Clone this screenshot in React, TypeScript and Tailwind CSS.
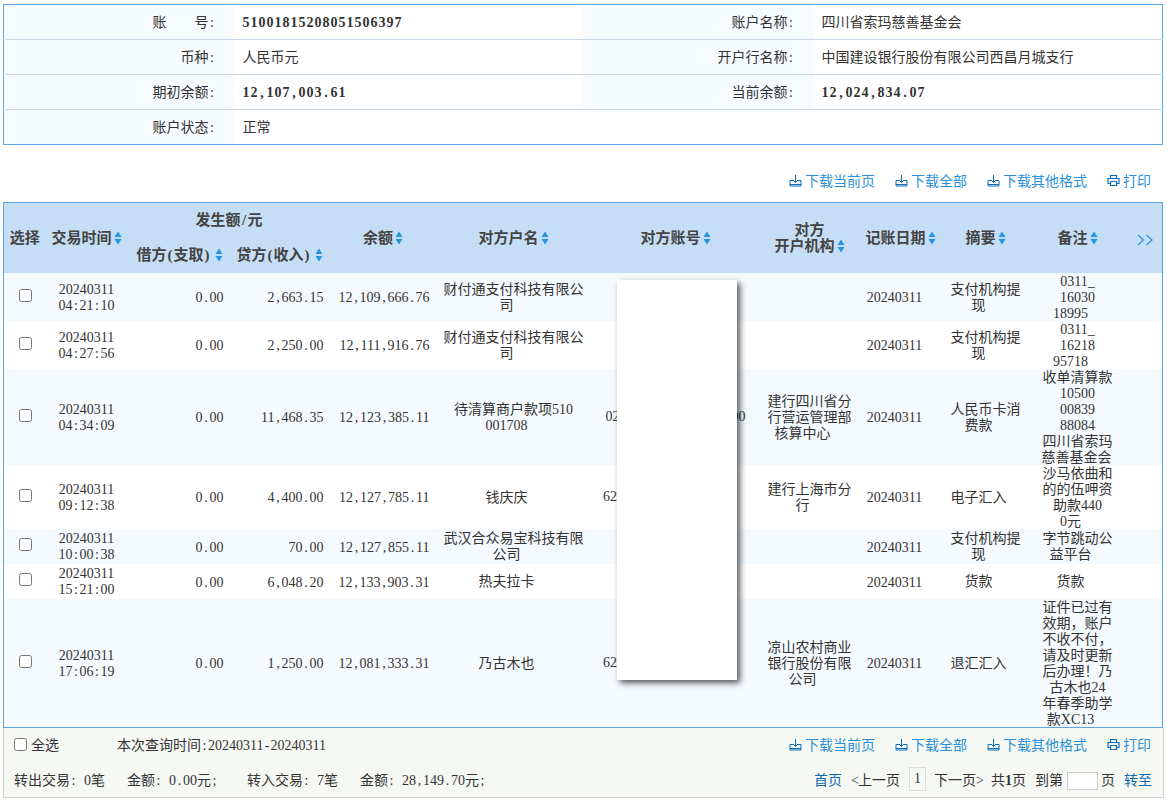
import type { ReactNode } from "react";

type Row = {
  date: string;
  time: string;
  credit: string;
  balance: string;
  name: string[];
  account: string;
  bank: string[];
  summary: string[];
  note: string[];
  accountTrail?: boolean;
};

const ROWS: Row[] = [
  { date: "20240311", time: "04:21:10", credit: "2,663.15", balance: "12,109,666.76", name: ["财付通支付科技有限公", "司"], account: "", bank: [], summary: ["支付机构提", "现"], note: ["0311_", "16030", "18995"] },
  { date: "20240311", time: "04:27:56", credit: "2,250.00", balance: "12,111,916.76", name: ["财付通支付科技有限公", "司"], account: "", bank: [], summary: ["支付机构提", "现"], note: ["0311_", "16218", "95718"] },
  { date: "20240311", time: "04:34:09", credit: "11,468.35", balance: "12,123,385.11", name: ["待清算商户款项510", "001708"], account: "02000000000000000000", bank: ["建行四川省分", "行营运管理部", "核算中心"], summary: ["人民币卡消", "费款"], note: ["收单清算款", "10500", "00839", "88084", "四川省索玛", "慈善基金会"] },
  { date: "20240311", time: "09:12:38", credit: "4,400.00", balance: "12,127,785.11", name: ["钱庆庆"], account: "6200000000000000000", accountTrail: true, bank: ["建行上海市分", "行"], summary: ["电子汇入"], note: ["沙马依曲和", "的的伍呷资", "助款440", "0元"] },
  { date: "20240311", time: "10:00:38", credit: "70.00", balance: "12,127,855.11", name: ["武汉合众易宝科技有限", "公司"], account: "", bank: [], summary: ["支付机构提", "现"], note: ["字节跳动公", "益平台"] },
  { date: "20240311", time: "15:21:00", credit: "6,048.20", balance: "12,133,903.31", name: ["热夫拉卡"], account: "", bank: [], summary: ["货款"], note: ["货款"] },
  { date: "20240311", time: "17:06:19", credit: "1,250.00", balance: "12,081,333.31", name: ["乃古木也"], account: "6200000000000000000", accountTrail: true, bank: ["凉山农村商业", "银行股份有限", "公司"], summary: ["退汇汇入"], note: ["证件已过有", "效期，账户", "不收不付，", "请及时更新", "后办理！乃", "古木也24", "年春季助学", "款XC13"] },
];

// ascii runs get a serif face, punctuation pinned to half width like the digits
function T({ children, wide }: { children: string; wide?: boolean }) {
  const parts = children.split(/([\x20-\x7e]+)/);
  return (
    <>
      {parts.map((p, i) =>
        i % 2 === 1 ? (
          <span key={i} className={`font-['Liberation_Serif'] leading-[12px] ${wide ? "tracking-[1px]" : ""}`}>
            {[...p].map((c, j) =>
              /[ ,.:;\-_()/<>]/.test(c) ? (
                <span key={j} className={`inline-block text-center ${wide ? "w-[8px]" : "w-[7px]"}`}>
                  {c}
                </span>
              ) : (
                c
              ),
            )}
          </span>
        ) : (
          p
        ),
      )}
    </>
  );
}

function Sort() {
  return (
    <svg width="8" height="14" viewBox="0 0 8 14" className="ml-[2px] inline-block align-[-2px]">
      <path d="M4 0.5 L7.5 6 H0.5 Z M4 13.5 L0.5 8 H7.5 Z" fill="#2494dc" />
    </svg>
  );
}

function DownloadIcon() {
  return (
    <svg width="13" height="13" viewBox="0 0 13 13" fill="none" stroke="#0b6cb8" strokeWidth="1">
      <path d="M4 6.5 H1 V12 H12 V6.5 H9" />
      <path d="M1 10.5 H12" />
      <path d="M6.5 1 V8.5 M4 6 L6.5 8.5 L9 6" />
    </svg>
  );
}

function PrintIcon() {
  return (
    <svg width="13" height="13" viewBox="0 0 13 13" fill="none" stroke="#0b6cb8" strokeWidth="1.2">
      <path d="M3.5 4 V1.5 H9.5 V4" />
      <path d="M3 9.5 H1 V4.5 H12 V9.5 H10" />
      <path d="M3.5 7.5 H9.5 V11.5 H3.5 Z" />
    </svg>
  );
}

function Toolbar() {
  const items = ["下载当前页", "下载全部", "下载其他格式"];
  return (
    <div className="flex items-center gap-[20px] text-[#2a90d8]">
      {items.map((t) => (
        <span key={t} className="flex items-center gap-[3px]">
          <DownloadIcon />
          {t}
        </span>
      ))}
      <span className="flex items-center gap-[3px]">
        <PrintIcon />
        打印
      </span>
    </div>
  );
}

function Lines({ lines }: { lines: string[] }) {
  return (
    <>
      {lines.map((l, i) => (
        <div
          key={i}
          className={`h-[16px] whitespace-nowrap ${i === lines.length - 1 ? "pr-[14px]" : ""}`}
        >
          <T>{l}</T>
        </div>
      ))}
    </>
  );
}

function InfoRow({
  left,
  leftValue,
  right,
  rightValue,
  bold,
  last,
}: {
  left: ReactNode;
  leftValue: ReactNode;
  right?: string;
  rightValue?: ReactNode;
  bold?: boolean;
  last?: boolean;
}) {
  const line = last ? "" : "border-b border-[#c8d6e5]";
  return (
    <tr className={`h-[35px] ${line}`}>
      <td className="bg-[#f6fbff] pb-[3px] pr-[17px] text-right">{left}</td>
      <td className={`pb-[3px] pl-[10px] ${bold ? "font-bold" : ""}`} colSpan={right ? 1 : 3}>
        {leftValue}
      </td>
      {right && <td className="bg-[#f6fbff] pb-[3px] pr-[18px] text-right">{right}<T>:</T></td>}
      {right && <td className={`pb-[3px] pl-[9px] ${bold ? "font-bold" : ""}`}>{rightValue}</td>}
    </tr>
  );
}

export default function App() {
  return (
    <div className="relative h-[801px] overflow-hidden bg-white px-[3px] pt-[4px] font-['Noto_Sans_CJK_SC',sans-serif] text-[14px] leading-[16px] text-[#333]">
      <table className="w-[1160px] table-fixed border border-[#5ba5e8]">
        <colgroup>
          <col className="w-[229px]" />
          <col className="w-[350px]" />
          <col className="w-[230px]" />
          <col />
        </colgroup>
        <tbody>
          <InfoRow
            left={
              <>
                账<span className="inline-block w-[28px]" />号<T>:</T>
              </>
            }
            leftValue={<T wide>51001815208051506397</T>}
            right="账户名称"
            rightValue={<span className="font-normal">四川省索玛慈善基金会</span>}
            bold
          />
          <InfoRow
            left={<>币种<T>:</T></>}
            leftValue="人民币元"
            right="开户行名称"
            rightValue="中国建设银行股份有限公司西昌月城支行"
          />
          <InfoRow
            left={<>期初余额<T>:</T></>}
            leftValue={<T wide>12,107,003.61</T>}
            right="当前余额"
            rightValue={<T wide>12,024,834.07</T>}
            bold
          />
          <InfoRow left={<>账户状态<T>:</T></>} leftValue="正常" last />
        </tbody>
      </table>

      <div className="flex h-[57px] items-center justify-end pb-[1px] pr-[13px] pt-[14px]">
        <Toolbar />
      </div>

      <table className="w-[1160px] table-fixed border border-[#5ba5e8] text-center">
        <colgroup>
          <col className="w-[42px]" />
          <col className="w-[82px]" />
          <col className="w-[102px]" />
          <col className="w-[101px]" />
          <col className="w-[105px]" />
          <col className="w-[156px]" />
          <col className="w-[168px]" />
          <col className="w-[100px]" />
          <col className="w-[70px]" />
          <col className="w-[112px]" />
          <col className="w-[72px]" />
          <col />
        </colgroup>
        <thead className="bg-[#c6def5] text-[15px] font-bold text-[#444]">
          <tr className="h-[35px]">
            <th rowSpan={2} className="pb-[2px]">选择</th>
            <th rowSpan={2} className="whitespace-nowrap pb-[2px]">交易时间<Sort /></th>
            <th colSpan={2} className="pb-[2px]">发生额<T>/</T>元</th>
            <th rowSpan={2} className="pb-[2px]">余额<Sort /></th>
            <th rowSpan={2} className="pb-[2px]">对方户名<Sort /></th>
            <th rowSpan={2} className="pb-[2px]">对方账号<Sort /></th>
            <th rowSpan={2} className="whitespace-nowrap pb-[2px]">
              对方
              <br />
              开户机构<Sort />
            </th>
            <th rowSpan={2} className="whitespace-nowrap pb-[2px] pl-[6px] text-left">记账日期<Sort /></th>
            <th rowSpan={2} className="pb-[2px]">摘要<Sort /></th>
            <th rowSpan={2} className="pb-[2px]">备注<Sort /></th>
            <th rowSpan={2} className="text-left">
              <svg width="17" height="12" viewBox="0 0 17 12" fill="none" stroke="#2a90d8" strokeWidth="1.2" className="ml-[23px] inline-block">
                <path d="M1 1 L6.5 6 L1 11 M9.5 1 L15 6 L9.5 11" />
              </svg>
            </th>
          </tr>
          <tr className="h-[35px]">
            <th className="whitespace-nowrap pb-[2px] pr-[7px] text-right">
              借方<T>(</T>支取<T>)</T><span className="inline-block w-[2px]" /><Sort />
            </th>
            <th className="whitespace-nowrap pb-[2px] pr-[8px] text-right">
              贷方<T>(</T>收入<T>)</T><span className="inline-block w-[2px]" /><Sort />
            </th>
          </tr>
        </thead>
        <tbody className="leading-[14px]">
          {ROWS.map((r, i) => (
            <tr key={r.time} className={`h-[35px] ${i % 2 === 0 ? "bg-[#f5fafe]" : "bg-white"}`}>
              <td className="pb-[5px] pl-[1px]">
                <input type="checkbox" className="align-middle" />
              </td>
              <td>
                <div className="h-[16px]"><T>{r.date}</T></div>
                <div className="h-[16px]"><T>{r.time}</T></div>
              </td>
              <td className="pr-[6px] text-right"><T>0.00</T></td>
              <td className="pr-[7px] text-right"><T>{r.credit}</T></td>
              <td className="pr-[6px] text-right"><T>{r.balance}</T></td>
              <td><Lines lines={r.name} /></td>
              <td className={`overflow-hidden pb-[2px] ${r.accountTrail ? "pr-[12px]" : ""}`}>{r.account && <T>{r.account}</T>}</td>
              <td><Lines lines={r.bank} /></td>
              <td><T>{r.date}</T></td>
              <td><Lines lines={r.summary} /></td>
              <td><Lines lines={r.note} /></td>
              <td />
            </tr>
          ))}
        </tbody>
      </table>

      <div className="border-x border-b border-[#cfcfcf] bg-[#f6f8f3]">
        <div className="flex h-[33px] items-center justify-between pl-[10px] pr-[12px]">
          <div className="flex items-center">
            <input type="checkbox" className="m-0 mr-[4px]" />
            <span>全选</span>
            <span className="ml-[58px]">本次查询时间<T>:20240311-20240311</T></span>
          </div>
          <Toolbar />
        </div>
        <div className="flex h-[36px] items-center justify-between pl-[10px] pr-[11px]">
          <div className="flex items-center">
            <span className="w-[113px]">转出交易<T>: 0</T>笔</span>
            <span className="w-[120px]">金额<T>: 0.00</T>元<T>;</T></span>
            <span className="w-[113px]">转入交易<T>: 7</T>笔</span>
            <span>金额<T>: 28,149.70</T>元<T>;</T></span>
          </div>
          <div className="flex items-center">
            <span className="text-[#0a68b4]">首页</span>
            <span className="ml-[9px]"><T>&lt;</T>上一页</span>
            <span className="ml-[9px] flex h-[24px] w-[17px] items-center justify-center border border-[#ddd]"><T>1</T></span>
            <span className="ml-[8px]">下一页<T>&gt;</T></span>
            <span className="ml-[8px]">共<b className="font-['Liberation_Serif'] leading-[12px]">1</b>页</span>
            <span className="ml-[9px]">到第</span>
            <span className="ml-[4px] mt-[4px] h-[18px] w-[31px] border border-[#ccc] bg-white" />
            <span className="ml-[3px]">页</span>
            <span className="ml-[9px] text-[#0a68b4]">转至</span>
          </div>
        </div>
      </div>

      <div className="absolute left-[617px] top-[280px] h-[400px] w-[120px] bg-white shadow-[3px_3px_6px_rgba(0,0,0,0.65)]" />
    </div>
  );
}
